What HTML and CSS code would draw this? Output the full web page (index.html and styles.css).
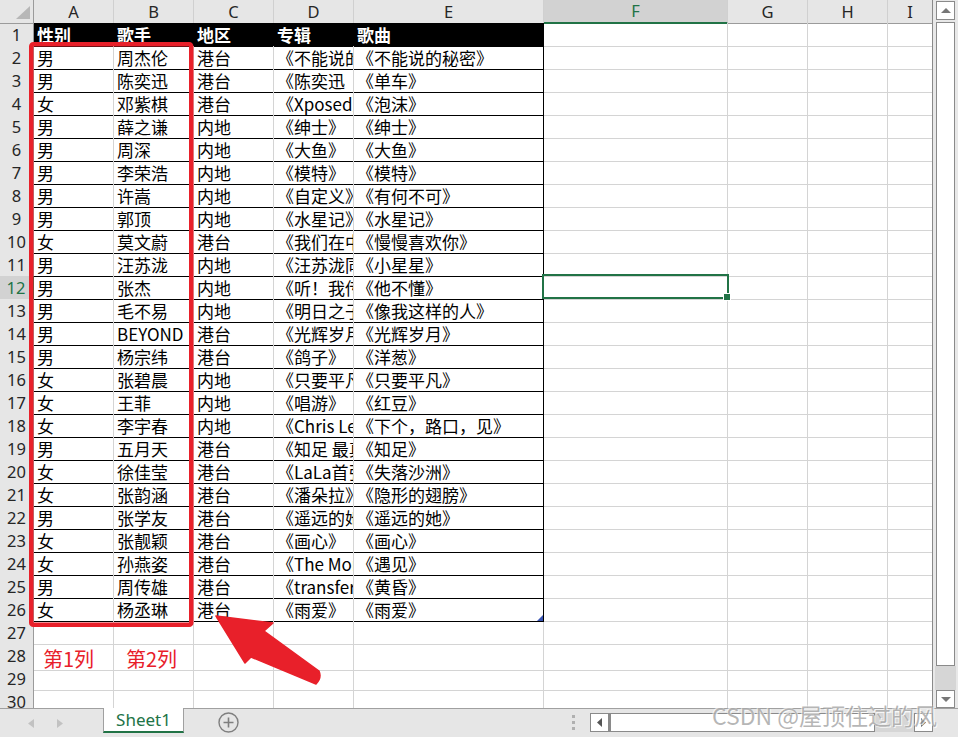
FILE: index.html
```html
<!DOCTYPE html>
<html lang="zh">
<head>
<meta charset="utf-8">
<title>Sheet1</title>
<link rel="stylesheet" href="styles.css">
</head>
<body>
<div class="app">
  <div class="main">
    <div class="sheet">
      <div class="r hdr"><div class="corner"></div><div class="x">A</div><div class="x">B</div><div class="x">C</div><div class="x">D</div><div class="x">E</div><div class="x on">F</div><div class="x">G</div><div class="x">H</div><div class="x">I</div></div>
      <div class="r"><div class="h">1</div><div class="c k">性别</div><div class="c k">歌手</div><div class="c k">地区</div><div class="c k">专辑</div><div class="c k">歌曲</div><div class="c"></div><div class="c"></div><div class="c"></div><div class="c"></div></div>
      <div class="r"><div class="h">2</div><div class="c t">男</div><div class="c t">周杰伦</div><div class="c t">港台</div><div class="c t">《不能说的秘密》</div><div class="c t e">《不能说的秘密》</div><div class="c"></div><div class="c"></div><div class="c"></div><div class="c"></div></div>
      <div class="r"><div class="h">3</div><div class="c t">男</div><div class="c t">陈奕迅</div><div class="c t">港台</div><div class="c t">《陈奕迅　十年》</div><div class="c t e">《单车》</div><div class="c"></div><div class="c"></div><div class="c"></div><div class="c"></div></div>
      <div class="r"><div class="h">4</div><div class="c t">女</div><div class="c t">邓紫棋</div><div class="c t">港台</div><div class="c t">《Xposed》</div><div class="c t e">《泡沫》</div><div class="c"></div><div class="c"></div><div class="c"></div><div class="c"></div></div>
      <div class="r"><div class="h">5</div><div class="c t">男</div><div class="c t">薛之谦</div><div class="c t">内地</div><div class="c t">《绅士》</div><div class="c t e">《绅士》</div><div class="c"></div><div class="c"></div><div class="c"></div><div class="c"></div></div>
      <div class="r"><div class="h">6</div><div class="c t">男</div><div class="c t">周深</div><div class="c t">内地</div><div class="c t">《大鱼》</div><div class="c t e">《大鱼》</div><div class="c"></div><div class="c"></div><div class="c"></div><div class="c"></div></div>
      <div class="r"><div class="h">7</div><div class="c t">男</div><div class="c t">李荣浩</div><div class="c t">内地</div><div class="c t">《模特》</div><div class="c t e">《模特》</div><div class="c"></div><div class="c"></div><div class="c"></div><div class="c"></div></div>
      <div class="r"><div class="h">8</div><div class="c t">男</div><div class="c t">许嵩</div><div class="c t">内地</div><div class="c t">《自定义》</div><div class="c t e">《有何不可》</div><div class="c"></div><div class="c"></div><div class="c"></div><div class="c"></div></div>
      <div class="r"><div class="h">9</div><div class="c t">男</div><div class="c t">郭顶</div><div class="c t">内地</div><div class="c t">《水星记》</div><div class="c t e">《水星记》</div><div class="c"></div><div class="c"></div><div class="c"></div><div class="c"></div></div>
      <div class="r"><div class="h">10</div><div class="c t">女</div><div class="c t">莫文蔚</div><div class="c t">港台</div><div class="c t">《我们在中场相遇》</div><div class="c t e">《慢慢喜欢你》</div><div class="c"></div><div class="c"></div><div class="c"></div><div class="c"></div></div>
      <div class="r"><div class="h">11</div><div class="c t">男</div><div class="c t">汪苏泷</div><div class="c t">内地</div><div class="c t">《汪苏泷同名专辑》</div><div class="c t e">《小星星》</div><div class="c"></div><div class="c"></div><div class="c"></div><div class="c"></div></div>
      <div class="r"><div class="h on">12</div><div class="c t">男</div><div class="c t">张杰</div><div class="c t">内地</div><div class="c t">《听！我传说中的》</div><div class="c t e">《他不懂》</div><div class="c"></div><div class="c"></div><div class="c"></div><div class="c"></div></div>
      <div class="r"><div class="h">13</div><div class="c t">男</div><div class="c t">毛不易</div><div class="c t">内地</div><div class="c t">《明日之子第一季》</div><div class="c t e">《像我这样的人》</div><div class="c"></div><div class="c"></div><div class="c"></div><div class="c"></div></div>
      <div class="r"><div class="h">14</div><div class="c t">男</div><div class="c t">BEYOND</div><div class="c t">港台</div><div class="c t">《光辉岁月》</div><div class="c t e">《光辉岁月》</div><div class="c"></div><div class="c"></div><div class="c"></div><div class="c"></div></div>
      <div class="r"><div class="h">15</div><div class="c t">男</div><div class="c t">杨宗纬</div><div class="c t">港台</div><div class="c t">《鸽子》</div><div class="c t e">《洋葱》</div><div class="c"></div><div class="c"></div><div class="c"></div><div class="c"></div></div>
      <div class="r"><div class="h">16</div><div class="c t">女</div><div class="c t">张碧晨</div><div class="c t">内地</div><div class="c t">《只要平凡》</div><div class="c t e">《只要平凡》</div><div class="c"></div><div class="c"></div><div class="c"></div><div class="c"></div></div>
      <div class="r"><div class="h">17</div><div class="c t">女</div><div class="c t">王菲</div><div class="c t">内地</div><div class="c t">《唱游》</div><div class="c t e">《红豆》</div><div class="c"></div><div class="c"></div><div class="c"></div><div class="c"></div></div>
      <div class="r"><div class="h">18</div><div class="c t">女</div><div class="c t">李宇春</div><div class="c t">内地</div><div class="c t">《Chris Lee》</div><div class="c t e">《下个，路口，见》</div><div class="c"></div><div class="c"></div><div class="c"></div><div class="c"></div></div>
      <div class="r"><div class="h">19</div><div class="c t">男</div><div class="c t">五月天</div><div class="c t">港台</div><div class="c t">《知足 最真杰作选》</div><div class="c t e">《知足》</div><div class="c"></div><div class="c"></div><div class="c"></div><div class="c"></div></div>
      <div class="r"><div class="h">20</div><div class="c t">女</div><div class="c t">徐佳莹</div><div class="c t">港台</div><div class="c t">《LaLa首张创作专辑》</div><div class="c t e">《失落沙洲》</div><div class="c"></div><div class="c"></div><div class="c"></div><div class="c"></div></div>
      <div class="r"><div class="h">21</div><div class="c t">女</div><div class="c t">张韵涵</div><div class="c t">港台</div><div class="c t">《潘朵拉》</div><div class="c t e">《隐形的翅膀》</div><div class="c"></div><div class="c"></div><div class="c"></div><div class="c"></div></div>
      <div class="r"><div class="h">22</div><div class="c t">男</div><div class="c t">张学友</div><div class="c t">港台</div><div class="c t">《遥远的她》</div><div class="c t e">《遥远的她》</div><div class="c"></div><div class="c"></div><div class="c"></div><div class="c"></div></div>
      <div class="r"><div class="h">23</div><div class="c t">女</div><div class="c t">张靓颖</div><div class="c t">港台</div><div class="c t">《画心》</div><div class="c t e">《画心》</div><div class="c"></div><div class="c"></div><div class="c"></div><div class="c"></div></div>
      <div class="r"><div class="h">24</div><div class="c t">女</div><div class="c t">孙燕姿</div><div class="c t">港台</div><div class="c t">《The Moment》</div><div class="c t e">《遇见》</div><div class="c"></div><div class="c"></div><div class="c"></div><div class="c"></div></div>
      <div class="r"><div class="h">25</div><div class="c t">男</div><div class="c t">周传雄</div><div class="c t">港台</div><div class="c t">《transfer》</div><div class="c t e">《黄昏》</div><div class="c"></div><div class="c"></div><div class="c"></div><div class="c"></div></div>
      <div class="r"><div class="h">26</div><div class="c t">女</div><div class="c t">杨丞琳</div><div class="c t">港台</div><div class="c t">《雨爱》</div><div class="c t e end">《雨爱》</div><div class="c"></div><div class="c"></div><div class="c"></div><div class="c"></div></div>
      <div class="r"><div class="h">27</div><div class="c"></div><div class="c"></div><div class="c"></div><div class="c"></div><div class="c"></div><div class="c"></div><div class="c"></div><div class="c"></div><div class="c"></div></div>
      <div class="r"><div class="h">28</div><div class="c note n1">第1列</div><div class="c note n2">第2列</div><div class="c"></div><div class="c"></div><div class="c"></div><div class="c"></div><div class="c"></div><div class="c"></div><div class="c"></div></div>
      <div class="r"><div class="h">29</div><div class="c"></div><div class="c"></div><div class="c"></div><div class="c"></div><div class="c"></div><div class="c"></div><div class="c"></div><div class="c"></div><div class="c"></div></div>
      <div class="r"><div class="h">30</div><div class="c"></div><div class="c"></div><div class="c"></div><div class="c"></div><div class="c"></div><div class="c"></div><div class="c"></div><div class="c"></div><div class="c"></div></div>

      <div class="sel"></div>
      <svg class="marks" width="932" height="708" viewBox="0 0 932 708">
        <rect x="31.25" y="44.25" width="160" height="580.5" rx="2" fill="none" stroke="#e8202a" stroke-width="4.5"/>
        <path d="M216 616 L273 623 L264 631 L319 671 Q322 678 316 684 L251 657 L245 663 Z" fill="#e8202a" stroke="#e8202a" stroke-width="1.5" stroke-linejoin="round"/>
      </svg>
    </div>
    <div class="vs">
      <div class="btn up"><svg width="10" height="5" viewBox="0 0 10 5"><path d="M0 5 L5 0 L10 5 Z" fill="#777"/></svg></div>
      <div class="thumb"></div>
      <div class="track"></div>
      <div class="btn dn"><svg width="10" height="5" viewBox="0 0 10 5"><path d="M0 0 L5 5 L10 0 Z" fill="#777"/></svg></div>
    </div>
  </div>
  <div class="tabs">
    <div class="nav">
      <svg class="navl" width="6" height="9" viewBox="0 0 6 9"><path d="M6 0 L0 4.5 L6 9 Z" fill="#c2c2c2"/></svg>
      <svg class="navr" width="6" height="9" viewBox="0 0 6 9"><path d="M0 0 L6 4.5 L0 9 Z" fill="#c2c2c2"/></svg>
    </div>
    <div class="tab">Sheet1</div>
    <svg class="plus" width="21" height="21" viewBox="0 0 21 21"><circle cx="10.5" cy="10.5" r="9.5" fill="none" stroke="#7f7f7f" stroke-width="1.4"/><path d="M10.5 5.5 V15.5 M5.5 10.5 H15.5" stroke="#7f7f7f" stroke-width="1.6"/></svg>
    <div class="dots"><span></span><span></span><span></span></div>
    <div class="hs">
      <div class="hbtn"><svg width="5" height="9" viewBox="0 0 5 9"><path d="M5 0 L0 4.5 L5 9 Z" fill="#555"/></svg></div>
      <div class="hthumb"></div>
      <div class="htrack"></div>
      <div class="hbtn"><svg width="5" height="9" viewBox="0 0 5 9"><path d="M0 0 L5 4.5 L0 9 Z" fill="#555"/></svg></div>
    </div>
  </div>
  <div class="wm">CSDN @屋顶住过的风</div>
</div>
</body>
</html>
```
FILE: styles.css
```css
* { box-sizing: border-box; }
html, body { margin: 0; padding: 0; }
body {
  width: 958px;
  height: 737px;
  overflow: hidden;
  background: #fff;
  font-family: "Noto Sans CJK SC", "Noto Sans", sans-serif;
}
.app {
  position: relative;
  display: flex;
  flex-direction: column;
  width: 958px;
  height: 737px;
}
.main {
  display: flex;
  height: 708px;
}
.sheet {
  position: relative;
  width: 932px;
  height: 708px;
  overflow: hidden;
}
.r {
  display: grid;
  grid-template-columns: 34px 80px 80px 80px 80px 190px 184px 80px 80px 44px;
  height: 23px;
}
.r > :last-child { border-right: 0; }

/* column header row */
.corner {
  position: relative;
  background: #e6e6e6;
  border-right: 1px solid #9b9b9b;
  border-bottom: 1px solid #9b9b9b;
}
.corner::after {
  content: "";
  position: absolute;
  right: 3px;
  bottom: 4px;
  width: 14px;
  height: 13px;
  background: #b7b7b7;
  clip-path: polygon(100% 0, 100% 100%, 0 100%);
}
.x {
  background: #e6e6e6;
  border-right: 1px solid #d0d0d0;
  border-bottom: 1px solid #9b9b9b;
  text-align: center;
  font-family: "Noto Sans", sans-serif;
  font-size: 16.5px;
  line-height: 23px;
  color: #262626;
}
.x.on {
  background: #d2d2d2;
  color: #217346;
  border-bottom: 2px solid #217346;
  line-height: 22px;
}

/* row headers */
.h {
  background: #e6e6e6;
  border-right: 1px solid #9b9b9b;
  border-bottom: 1px solid #cdcdcd;
  text-align: center;
  font-family: "Noto Sans", sans-serif;
  font-size: 16.5px;
  line-height: 23px;
  color: #262626;
}
.h.on {
  background: #d2d2d2;
  color: #217346;
  border-right: 2px solid #217346;
}

/* cells */
.c {
  border-right: 1px solid #d4d4d4;
  border-bottom: 1px solid #d4d4d4;
  padding-left: 3px;
  font-size: 17px;
  line-height: 24px;
  white-space: nowrap;
  overflow: hidden;
  color: #000;
}
.t { border-bottom-color: #000; }
.e { border-right-color: #000; }
.k {
  background: #000;
  color: #fff;
  font-weight: bold;
  border-right-color: #000;
  border-bottom-color: #000;
}
.end { position: relative; }
.end::after {
  content: "";
  position: absolute;
  right: 0;
  bottom: 0;
  width: 6px;
  height: 6px;
  background: #3a55b4;
  clip-path: polygon(100% 0, 100% 100%, 0 100%);
}
.note {
  overflow: visible;
  color: #e8202a;
  font-size: 20px;
  line-height: 22px;
  padding-top: 4px;
}
.n1 { padding-left: 9px; }
.n2 { padding-left: 12px; }

/* selection overlay */
.sel {
  position: absolute;
  left: 542px;
  top: 274px;
  width: 187px;
  height: 25px;
  border: 2px solid #217346;
  pointer-events: none;
}
.sel::after {
  content: "";
  position: absolute;
  right: -4px;
  bottom: -4px;
  width: 6px;
  height: 6px;
  background: #217346;
  border: 1px solid #fff;
}
.marks {
  position: absolute;
  left: 0;
  top: 0;
  pointer-events: none;
}

/* vertical scrollbar */
.vs {
  width: 26px;
  height: 708px;
  background: #e8e8e8;
  border-left: 1px solid #8a8a8a;
  display: flex;
  flex-direction: column;
  padding: 1px 3px 0 3px;
}
.btn {
  display: flex;
  align-items: center;
  justify-content: center;
  background: #fff;
  border: 1px solid #8a8a8a;
}
.btn.up { height: 19px; margin-bottom: 2px; }
.btn.dn { height: 18px; }
.thumb {
  height: 644px;
  background: #fff;
  border: 1px solid #8a8a8a;
}
.track {
  flex: 1;
  background: #d6d6d6;
  margin: 0 -1px;
}

/* tab bar */
.tabs {
  height: 29px;
  background: #e6e6e6;
  border-top: 1px solid #a0a0a0;
  display: flex;
  align-items: flex-start;
}
.nav {
  width: 103px;
  height: 28px;
  display: flex;
  align-items: center;
  padding-left: 28px;
  gap: 23px;
}
.tab {
  width: 81px;
  height: 25px;
  margin-top: -1px;
  background: #fff;
  border-left: 1px solid #a0a0a0;
  border-right: 1px solid #a0a0a0;
  border-bottom: 2px solid #217346;
  color: #217346;
  font-family: "Noto Sans", sans-serif;
  font-size: 17px;
  line-height: 23px;
  text-align: center;
}
.plus {
  margin-left: 34px;
  margin-top: 3px;
}
.dots {
  margin-left: 333px;
  margin-top: 6px;
  display: flex;
  flex-direction: column;
  gap: 3px;
}
.dots span {
  width: 3px;
  height: 3px;
  background: #b0b0b0;
}
.hs {
  display: flex;
  margin-left: 15px;
  margin-top: 4px;
  width: 343px;
  height: 19px;
}
.hbtn {
  width: 19px;
  height: 19px;
  background: #fff;
  border: 1px solid #8a8a8a;
  display: flex;
  align-items: center;
  justify-content: center;
}
.hthumb {
  width: 266px;
  background: #fff;
  border: 1px solid #8a8a8a;
  border-left-width: 2px;
}
.htrack {
  flex: 1;
  background: #d6d6d6;
}

/* watermark */
.wm {
  position: absolute;
  left: 712px;
  top: 700px;
  font-family: "Noto Sans CJK SC", sans-serif;
  font-size: 23px;
  line-height: 30px;
  color: rgba(150, 150, 150, 0.7);
  text-shadow: 1px 1px 0 rgba(255,255,255,0.8), -1px -1px 0 rgba(255,255,255,0.6);
  white-space: nowrap;
  pointer-events: none;
}
```
